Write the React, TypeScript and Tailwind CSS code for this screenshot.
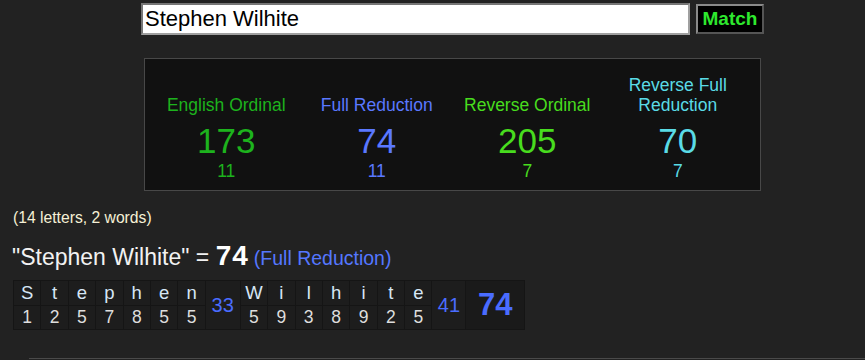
import React from 'react';

const ciphers = [
  { name: ['English Ordinal'], value: 173, reduced: 11, color: 'text-[#1db31d]' },
  { name: ['Full Reduction'], value: 74, reduced: 11, color: 'text-[#5a78ff]' },
  { name: ['Reverse Ordinal'], value: 205, reduced: 7, color: 'text-[#48dc1e]' },
  { name: ['Reverse Full', 'Reduction'], value: 70, reduced: 7, color: 'text-[#5adbe6]' },
];

const words = [
  { letters: 'Stephen'.split(''), values: [1, 2, 5, 7, 8, 5, 5], total: 33 },
  { letters: 'Wilhite'.split(''), values: [5, 9, 3, 8, 9, 2, 5], total: 41 },
];

const CipherColumn = ({ c }: { c: (typeof ciphers)[number] }) => (
  <div className={`flex flex-col items-center text-center ${c.color}`}>
    <div className="text-[17.5px] leading-[20px]">
      {c.name.map((line) => (
        <div key={line}>{line}</div>
      ))}
    </div>
    <div className="mt-[6px] text-[35px] leading-[40px]">{c.value}</div>
    <div className="text-[17.5px] leading-[20px]">{c.reduced}</div>
  </div>
);

export default function App() {
  const letterCell = 'flex items-center justify-center bg-[#1d1d1d] text-[18.5px] text-[#d6e6f5]';
  const numberCell = 'flex items-center justify-center bg-[#1d1d1d] text-[17.5px] text-[#dedede]';
  const totalCell = 'row-span-2 flex items-center justify-center bg-[#1d1d1d] text-[20px] text-[#4a6cff]';

  return (
    <div className="h-[360px] overflow-hidden bg-[#222] font-['Liberation_Sans',Arial,sans-serif]">
      {/* search bar */}
      <div className="flex items-start pt-[3px] pl-[141px]">
        <div className="h-[32px] w-[549px] border-2 border-t-[#767676] border-l-[#767676] border-r-[#a0a0a0] border-b-[#a0a0a0] bg-white pl-[2px] text-[22px] leading-[28px] text-black">
          Stephen Wilhite
        </div>
        <button className="mt-[1px] ml-[6px] h-[30px] w-[68px] border-2 border-t-[#8a8a8a] border-l-[#8a8a8a] border-r-[#555] border-b-[#555] bg-black text-[19px] font-bold leading-[24px] text-[#2ee82e]">
          Match
        </button>
      </div>

      {/* cipher summary */}
      <div className="mt-[23px] ml-[144px] w-[617px] border border-[#484848] bg-[#111] pt-[16px] pb-[9px] pl-[6px]">
        <div className="grid grid-cols-[repeat(4,150.5px)] items-end">
          {ciphers.map((c) => (
            <CipherColumn key={c.name.join(' ')} c={c} />
          ))}
        </div>
      </div>

      <div className="mt-[18px] ml-[13px] text-[15.7px] leading-[18px] text-[#f5f0d5]">(14 letters, 2 words)</div>

      <div className="mt-[15px] ml-[12px] flex items-baseline leading-none">
        <span className="text-[23px] text-[#f2f2f2] whitespace-pre">"Stephen Wilhite" = </span>
        <span className="text-[28px] font-bold tracking-[1px] text-white">74</span>
        <span className="ml-[5px] text-[19.5px] text-[#5577ff]">(Full Reduction)</span>
      </div>

      {/* letter breakdown */}
      <div className="mt-[10px] ml-[13px] inline-grid grid-cols-[repeat(7,26.4px)_34px_repeat(7,26.4px)_33px_57.5px] grid-rows-[24px_23px] gap-px bg-[#151515] p-px">
        {words[0].letters.map((l, i) => (
          <div key={'a' + i} className={letterCell}>{l}</div>
        ))}
        <div className={totalCell}>{words[0].total}</div>
        {words[1].letters.map((l, i) => (
          <div key={'b' + i} className={letterCell}>{l}</div>
        ))}
        <div className={totalCell}>{words[1].total}</div>
        <div className="row-span-2 flex items-center justify-center bg-[#1a1a1a] text-[31px] font-bold text-[#4a6cff]">74</div>
        {words.map((w, wi) =>
          w.values.map((v, i) => (
            <div key={wi + '-' + i} className={numberCell}>{v}</div>
          ))
        )}
      </div>

      <div className="mt-[28px] ml-[29px] border-t border-[#4a4a4a]" />
    </div>
  );
}
